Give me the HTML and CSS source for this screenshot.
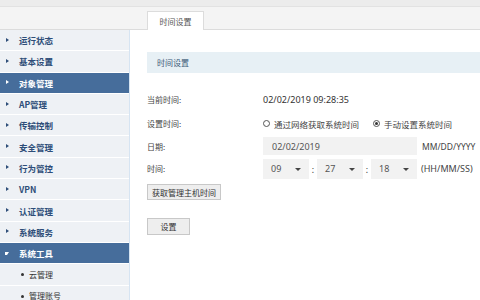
FILE: index.html
```html
<!DOCTYPE html>
<html>
<head>
<meta charset="utf-8">
<link rel="stylesheet" href="styles.css">
</head>
<body>
<div class="topstrip"></div>
<div class="tabbar">
  <div class="tab">时间设置</div>
</div>
<div class="layout">
  <ul class="side">
    <li class="item"><span class="tri"></span>运行状态</li>
    <li class="item"><span class="tri"></span>基本设置</li>
    <li class="item active"><span class="tri"></span>对象管理</li>
    <li class="item"><span class="tri"></span>AP管理</li>
    <li class="item"><span class="tri"></span>传输控制</li>
    <li class="item"><span class="tri"></span>安全管理</li>
    <li class="item"><span class="tri"></span>行为管控</li>
    <li class="item"><span class="tri"></span>VPN</li>
    <li class="item"><span class="tri"></span>认证管理</li>
    <li class="item"><span class="tri"></span>系统服务</li>
    <li class="item active open"><span class="tri down"></span>系统工具</li>
    <li class="sub"><span class="dot"></span>云管理</li>
    <li class="sub"><span class="dot"></span>管理账号</li>
  </ul>
  <main class="main">
    <div class="section">时间设置</div>
    <div class="form">
      <div class="row"><span class="label">当前时间:</span><span class="val">02/02/2019 09:28:35</span></div>
      <div class="row"><span class="label">设置时间:</span>
        <span class="radio"></span><span class="rtext">通过网络获取系统时间</span>
        <span class="radio on"></span><span class="rtext">手动设置系统时间</span>
      </div>
      <div class="row"><span class="label">日期:</span><span class="input">02/02/2019</span><span class="hint">MM/DD/YYYY</span></div>
      <div class="row"><span class="label">时间:</span>
        <span class="sel">09<span class="arr"></span></span><span class="colon">:</span>
        <span class="sel">27<span class="arr"></span></span><span class="colon">:</span>
        <span class="sel">18<span class="arr"></span></span>
        <span class="hint2">(HH/MM/SS)</span>
      </div>
      <button class="btn wide">获取管理主机时间</button>
      <button class="btn set">设置</button>
    </div>
  </main>
</div>
</body>
</html>
```
FILE: styles.css
```css
* { box-sizing: border-box; }
html, body { margin: 0; padding: 0; }
body { width: 480px; height: 300px; overflow: hidden; background: #fff;
  font-family: "Noto Sans CJK SC", "Liberation Sans", sans-serif; font-size: 8px; color: #333; }
.topstrip { height: 7px; background: #ececec; border-bottom: 1px solid #e2e2e2; }
.tabbar { height: 23px; background: #f4f4f4; border-bottom: 1px solid #dcdcdc; padding-left: 147px; display: flex; align-items: flex-end; }
.tab { width: 57px; height: 19px; background: #fff; border: 1px solid #dcdcdc; border-bottom: none; margin-bottom: -1px;
  display: flex; align-items: center; justify-content: center; color: #555; font-size: 8px; }
.layout { display: flex; }
.side { list-style: none; margin: 0; padding: 0; width: 130px; background: #eef1f5; border-right: 1px solid #d6e4f2; }
.item { height: 21.3px; display: flex; align-items: center; padding-left: 19px; position: relative;
  color: #2d4d78; font-weight: bold; font-size: 8.5px; border-bottom: 1px solid #fff; }
.item.active { background: #466d9b; color: #fff; }
.tri { position: absolute; left: 6px; top: 50%; margin-top: -2.5px; width: 0; height: 0;
  border-left: 3px solid #2d4d78; border-top: 2.5px solid transparent; border-bottom: 2.5px solid transparent; }
.item.active .tri { border-left-color: #fff; }
.tri.down { margin-top: -1px; border-left: 2.5px solid transparent; border-right: 2.5px solid transparent; border-top: 3px solid #fff; border-bottom: none; left: 5px; }
.sub { height: 21.3px; display: flex; align-items: center; padding-left: 29px; position: relative; color: #333; font-size: 8px; border-bottom: 1px solid #fff; }
.dot { position: absolute; left: 21px; top: 50%; margin-top: -1px; width: 3px; height: 3px; background: #333; border-radius: 50%; }
.main { flex: 1; padding: 22px 0 0 17px; }
.section { height: 21px; background: #e7f0f5; display: flex; align-items: center; padding-left: 10px; color: #3c5a78; font-size: 8px; }
.form { padding-top: 17px; font-size: 8.5px; }
.row { display: flex; align-items: center; height: 21px; margin-bottom: 1.5px; color: #444; }
.row:first-child { height: 19px; margin-bottom: 4px; }
.label { width: 116px; font-size: 8px; }
.val { color: #333; font-family: "Noto Sans", "Liberation Sans", sans-serif; font-size: 9px; }
.radio { width: 7px; height: 7px; border: 1px solid #555; border-radius: 50%; margin-right: 4px; position: relative; }
.radio.on::after { content: ""; position: absolute; left: 1px; top: 1px; width: 3px; height: 3px; background: #333; border-radius: 50%; }
.rtext { margin-right: 14px; color: #444; }
.input { width: 154px; height: 18px; background: #f2f2f2; display: flex; align-items: center; padding-left: 9px; font-family: "Noto Sans", "Liberation Sans", sans-serif; color: #555; font-size: 9px; }
.hint { margin-left: 5px; font-family: "Noto Sans", "Liberation Sans", sans-serif; color: #444; font-size: 8.5px; }
.sel { width: 46px; height: 20px; background: #f2f2f2; display: flex; align-items: center; padding-left: 8px; position: relative; font-family: "Noto Sans", "Liberation Sans", sans-serif; color: #555; font-size: 9px; }
.arr { position: absolute; left: 32px; top: 9px; border-left: 3px solid transparent; border-right: 3px solid transparent; border-top: 3px solid #444; }
.colon { width: 8px; text-align: center; color: #444; }
.hint2 { margin-left: 4px; font-family: "Noto Sans", "Liberation Sans", sans-serif; color: #444; font-size: 9px; }
.btn { display: block; font-family: inherit; font-size: 8px; color: #333; background: #eeeeee; border: 1px solid #c8c8c8; padding: 0; }
.wide { width: 74px; height: 16px; margin-top: 5px; }
.set { width: 43px; height: 17px; margin-top: 18px; }
```
